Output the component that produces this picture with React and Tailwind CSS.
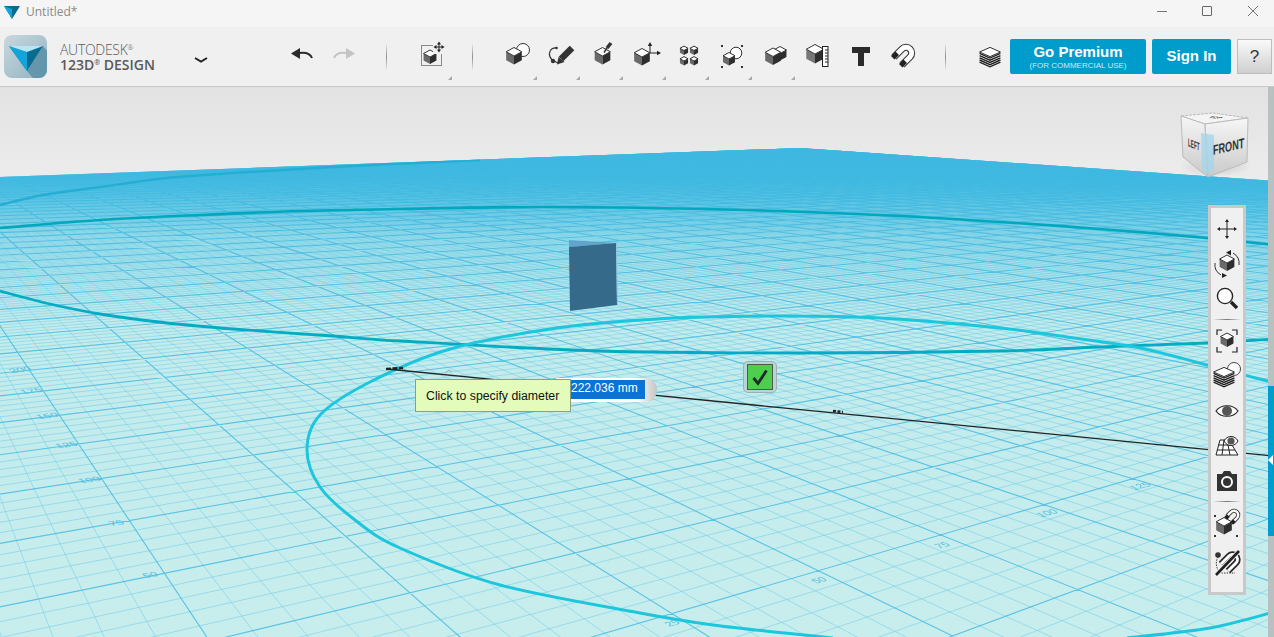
import React from "react";

/* ---------- ground-plane projection ---------- */
const A = 0.1106, B = 0.1486;
const V1 = [2290, 140], V2 = [-150, 100], O = [493, 666];
function H(i, j) {
  const d = 1 + A * i + B * j;
  return [
    (A * V1[0] * i + B * V2[0] * j + O[0]) / d,
    (A * V1[1] * i + B * V2[1] * j + O[1]) / d,
  ];
}
const IMIN = -40, IMAX = 58, JMIN = -3, JMAX = 66;
function seg(p, q) {
  return `M${p[0].toFixed(1)} ${p[1].toFixed(1)}L${q[0].toFixed(1)} ${q[1].toFixed(1)}`;
}
function buildGrid() {
  let major = "", minor = "";
  for (let k = IMIN * 5; k <= IMAX * 5; k++) {
    const i = k / 5;
    const j0 = Math.max(JMIN, (0.2 - 1 - A * i) / B);
    const s = seg(H(i, j0), H(i, JMAX));
    if (k % 5 === 0) major += s; else minor += s;
  }
  for (let k = JMIN * 5; k <= JMAX * 5; k++) {
    const j = k / 5;
    const i0 = Math.max(IMIN, (0.2 - 1 - B * j) / A);
    const s = seg(H(i0, j), H(IMAX, j));
    if (k % 5 === 0) major += s; else minor += s;
  }
  return { major, minor };
}
const GRID = buildGrid();

function smooth(pts) {
  let d = `M${pts[0][0]} ${pts[0][1]}`;
  for (let n = 0; n < pts.length - 1; n++) {
    const p0 = pts[n - 1] || pts[n], p1 = pts[n], p2 = pts[n + 1], p3 = pts[n + 2] || p2;
    const c1 = [p1[0] + (p2[0] - p0[0]) / 6, p1[1] + (p2[1] - p0[1]) / 6];
    const c2 = [p2[0] - (p3[0] - p1[0]) / 6, p2[1] - (p3[1] - p1[1]) / 6];
    d += `C${c1[0].toFixed(1)} ${c1[1].toFixed(1)} ${c2[0].toFixed(1)} ${c2[1].toFixed(1)} ${p2[0]} ${p2[1]}`;
  }
  return d;
}
const CURVE_FAINT = smooth([[0,205],[43,195],[100,187],[167,178],[233,173],[333,167],[480,160]]);
const CURVE_TOP = smooth([[0,228],[100,220],[200,215],[300,211],[400,209],[540,207],[707,209],[880,215],[1000,222],[1100,229],[1207,238],[1274,245]]);
const CURVE_LOW = smooth([[0,291],[50,304],[100,314],[167,323],[233,329],[333,336],[400,341],[600,351],[800,353],[1000,351],[1100,347],[1207,343],[1274,339]]);
const CYAN_TOP = smooth([[1274,383],[1207,365],[1140,348],[1067,337],[1000,328],[880,318],[770,316],[657,319],[550,329],[447,350],[370,382],[320,415],[307,450],[320,487],[355,520],[400,548],[500,585],[640,613],[713,625],[785,633],[833,638]]);
const CYAN_BR = smooth([[1127,638],[1210,628],[1274,612]]);

const LEFT_LABELS = [["50",152,577],["75",118,525],["100",91,482],["125",68,447],["150",49,418],["175",33,393],["200",22,372]];
const RIGHT_LABELS = [["25",675,625],["50",822,582],["75",945,547],["100",1050,515],["125",1143,488]];

/* ---------- icon helpers ---------- */
function Cube({ x, y, s, top = "#fff", left = "#6a6a6a", right = "#2e2e2e" }) {
  const w = s * 0.92;
  return (
    <g>
      <polygon points={`${x-w},${y-s*0.5} ${x},${y} ${x},${y+s} ${x-w},${y+s*0.5}`} fill={left} />
      <polygon points={`${x+w},${y-s*0.5} ${x},${y} ${x},${y+s} ${x+w},${y+s*0.5}`} fill={right} />
      <polygon points={`${x},${y-s} ${x+w},${y-s*0.5} ${x},${y} ${x-w},${y-s*0.5}`} fill={top} stroke="#333" strokeWidth="1" />
    </g>
  );
}
function Ico({ children, w = 32, h = 32 }) {
  return <svg width={w} height={h} viewBox={`0 0 ${w} ${h}`} className="block">{children}</svg>;
}
function Arrows4({ x, y, r, sw = 1 }) {
  const a = 2;
  return (
    <g fill="#222" stroke="none">
      <path d={`M${x-r} ${y}H${x+r}M${x} ${y-r}V${y+r}`} stroke="#222" strokeWidth={sw} fill="none" />
      <polygon points={`${x},${y-r-a} ${x-a},${y-r+a/2} ${x+a},${y-r+a/2}`} />
      <polygon points={`${x},${y+r+a} ${x-a},${y+r-a/2} ${x+a},${y+r-a/2}`} />
      <polygon points={`${x-r-a},${y} ${x-r+a/2},${y-a} ${x-r+a/2},${y+a}`} />
      <polygon points={`${x+r+a},${y} ${x+r-a/2},${y-a} ${x+r-a/2},${y+a}`} />
    </g>
  );
}
const IconAdd = () => (
  <Ico>
    <rect x="5.5" y="4.5" width="20" height="20" fill="none" stroke="#222" strokeWidth="1" strokeDasharray="1 1" />
    <Cube x={14} y={16} s={7} />
    <rect x="17" y="1" width="13" height="12" fill="#f0f0f0" />
    <Arrows4 x={23} y={6} r={3.5} />
  </Ico>
);
const IconPrimitive = () => (
  <Ico>
    <circle cx="22" cy="9" r="6.5" fill="#fff" stroke="#333" strokeWidth="1" />
    <Cube x={13} y={15} s={8.5} />
  </Ico>
);
const IconSketch = () => (
  <Ico>
    <path d="M13 7C6 6 3 13 8 19L14 22" fill="none" stroke="#333" strokeWidth="1.2" />
    <circle cx="9" cy="20" r="2.2" fill="#333" />
    <circle cx="12.5" cy="7" r="1.3" fill="#333" />
    <path d="M17 18L28 7" stroke="#333" strokeWidth="6.5" />
    <polygon points="13,23.5 14.5,16 20.5,21" fill="#333" />
  </Ico>
);
const IconConstruct = () => (
  <Ico>
    <Cube x={15.5} y={15} s={8.5} />
    <path d="M17 11.5L20 7" stroke="#333" strokeWidth="1.5" />
    <path d="M20 7L24 2" stroke="#333" strokeWidth="3.5" />
  </Ico>
);
const IconTransform = () => (
  <Ico>
    <Cube x={12} y={16} s={8.5} />
    <path d="M20 12V4M20 12H28" stroke="#222" strokeWidth="1" />
    <polygon points="20,1 17.8,5 22.2,5" fill="#222" />
    <polygon points="31,12 27,9.8 27,14.2" fill="#222" />
  </Ico>
);
const IconPattern = () => (
  <Ico>
    <Cube x={11} y={9.5} s={4.4} />
    <Cube x={21} y={9.5} s={4.4} />
    <Cube x={11} y={20} s={4.4} />
    <Cube x={21} y={20} s={4.4} />
  </Ico>
);
const IconGroup = () => (
  <Ico>
    <circle cx="20" cy="12" r="5.8" fill="#fff" stroke="#333" strokeWidth="1" />
    <Cube x={13} y={18} s={6.5} />
    {[[6,5],[26,5],[6,26],[26,26]].map(([x,y]) => <rect key={x+"-"+y} x={x-1} y={y-1} width="2" height="2" fill="#333" />)}
  </Ico>
);
const IconCombine = () => (
  <Ico>
    <Cube x={21} y={12.5} s={7} />
    <Cube x={14} y={15.5} s={8.5} />
  </Ico>
);
const IconMeasure = () => (
  <Ico>
    <Cube x={13} y={13} s={9.5} left="#777" />
    <rect x="20.5" y="5.5" width="5.5" height="20" fill="#fff" stroke="#222" strokeWidth="1" />
    <path d="M23 9h3M23 12h3M23 15h3M23 18h3M23 21h3" stroke="#222" strokeWidth="1" />
  </Ico>
);
const IconT = () => (
  <Ico>
    <path d="M7 6H25V12H19V25H13V12H7Z" fill="#2b2b2b" />
  </Ico>
);
const IconMagnet = () => (
  <Ico>
    <g transform="translate(0 -3)">
      <path d="M6 19L14 11A5.5 5.5 0 0 1 22 19L14 27" fill="none" stroke="#333" strokeWidth="7" />
      <path d="M6 19L14 11A5.5 5.5 0 0 1 22 19L14 27" fill="none" stroke="#fff" strokeWidth="5" />
      <polygon points="3,18 7.5,13.5 11,17 6.5,21.5" fill="#222" />
      <polygon points="11,26 15.5,21.5 19,25 14.5,29.5" fill="#222" />
    </g>
  </Ico>
);
function Stack({ x, y, s, lines = 5 }) {
  const w = s * 0.95;
  const h = s * 0.42;
  const rows = [];
  for (let n = 0; n < lines; n++) {
    const dy = n * 2.2;
    rows.push(
      <path key={n} d={`M${x-w} ${y+1.4+dy}L${x} ${y+h+1.4+dy}L${x+w} ${y+1.4+dy}`} fill="none" stroke="#1f1f1f" strokeWidth="1.4" />
    );
  }
  return (
    <g>
      <polygon points={`${x-w},${y} ${x},${y+h} ${x+w},${y} ${x+w},${y+lines*2.2} ${x},${y+h+lines*2.2} ${x-w},${y+lines*2.2}`} fill="#fff" />
      {rows}
      <polygon points={`${x},${y-h} ${x+w},${y} ${x},${y+h} ${x-w},${y}`} fill="#fff" stroke="#333" strokeWidth="1" />
    </g>
  );
}
const IconStack = () => <Ico><Stack x={16} y={11} s={11} /></Ico>;
const IconMove = () => <Ico><Arrows4 x={16} y={16} r={8} /></Ico>;
const IconOrbit = () => (
  <Ico>
    <path d="M22 5A12 12 0 0 1 28 17" fill="none" stroke="#333" strokeWidth="1" />
    <path d="M10 27A12 12 0 0 1 4 15" fill="none" stroke="#333" strokeWidth="1" />
    <polygon points="15,4.5 20,2 20,7.5" fill="#222" />
    <polygon points="16,27.5 11,25 11,30" fill="#222" />
    <Cube x={16} y={15} s={8} />
  </Ico>
);
const IconZoom = () => (
  <Ico>
    <circle cx="14" cy="13" r="7.6" fill="#fff" stroke="#222" strokeWidth="1.4" />
    <path d="M20 19L26 25" stroke="#222" strokeWidth="3.4" />
  </Ico>
);
const IconFit = () => (
  <Ico>
    <path d="M6 10V5H11M21 5H26V10M26 22V27H21M11 27H6V22" fill="none" stroke="#222" strokeWidth="1.2" />
    <Cube x={16} y={15} s={7} />
  </Ico>
);
const IconLayers = () => (
  <Ico>
    <circle cx="23" cy="9" r="6.5" fill="#fff" stroke="#444" strokeWidth="1" />
    <Stack x={13} y={12} s={11} />
  </Ico>
);
const IconEye = () => (
  <Ico>
    <path d="M5 16C10 9 22 9 27 16C22 23 10 23 5 16Z" fill="#fff" stroke="#222" strokeWidth="1.2" />
    <circle cx="16" cy="16" r="5" fill="#555" />
  </Ico>
);
const IconGridEye = () => (
  <Ico>
    <path d="M9 10H18L27 25H5Z" fill="#fff" stroke="#222" strokeWidth="1" />
    <path d="M7.5 15H21M6 20H24M13 10L11 25M16 10L19 25" stroke="#222" strokeWidth="1" />
    <path d="M13 11C16 5 24 5 27 11C24 17 16 17 13 11Z" fill="#fff" stroke="#222" strokeWidth="1" />
    <circle cx="20" cy="11" r="3.6" fill="#555" />
  </Ico>
);
const IconCamera = () => (
  <Ico>
    <path d="M6 9H11L13 6H19L21 9H26V26H6Z" fill="#333" />
    <circle cx="16" cy="17" r="5" fill="#333" stroke="#fff" strokeWidth="2" />
  </Ico>
);
const IconSnap = () => (
  <Ico>
    <Cube x={13} y={19} s={8.5} />
    <path d="M16 9L20 5A4 4 0 0 1 26 11L22 15" fill="none" stroke="#333" strokeWidth="4" />
    <path d="M16 9L20 5A4 4 0 0 1 26 11L22 15" fill="none" stroke="#fff" strokeWidth="2.4" />
    <rect x="14" y="8" width="4" height="4" fill="#222" transform="rotate(45 16 10)" />
    <rect x="20" y="13" width="4" height="4" fill="#222" transform="rotate(45 22 15)" />
    {[[4,9],[4,29],[26,29]].map(([x,y]) => <rect key={x+"-"+y} x={x-1} y={y-1} width="2" height="2" fill="#333" />)}
  </Ico>
);
const IconNoSnap = () => (
  <Ico>
    <circle cx="7" cy="9" r="2.8" fill="#333" />
    <path d="M7 11C4 16 5 24 10 27H24" fill="none" stroke="#333" strokeWidth="1" strokeDasharray="1.4 1.2" />
    <path d="M10 18L18 10A4.5 4.5 0 0 1 25 17L17 25" fill="none" stroke="#2a2a2a" strokeWidth="6.5" />
    <path d="M10 18L18 10A4.5 4.5 0 0 1 25 17L17 25" fill="none" stroke="#fff" strokeWidth="3" />
    <path d="M5 29L28 5" stroke="#f0f0f0" strokeWidth="4.5" />
    <path d="M5 29L28 5" stroke="#1f1f1f" strokeWidth="2.6" />
  </Ico>
);

function Sep() {
  return <div className="w-px h-[28px] bg-gradient-to-b from-[#f0f0f0] via-[#8f8f8f] to-[#f0f0f0]" />;
}
function Slot({ children, mark = false }) {
  return (
    <div className="relative w-[43px] h-[32px] flex items-center justify-center">
      {children}
      {mark && (
        <div className="absolute right-[1px] -bottom-[7px] w-0 h-0 border-l-[4px] border-l-transparent border-b-[4px] border-b-[#a8a8a8]" />
      )}
    </div>
  );
}
function Row({ children }) {
  return <div className="h-[35px] flex items-center justify-center">{children}</div>;
}
function PanelSep() {
  return (
    <div className="h-[7px] flex items-center justify-center">
      <div className="w-[28px] h-px bg-gradient-to-r from-[#f0f0f0] via-[#777777] to-[#f0f0f0]" />
    </div>
  );
}

function Logo() {
  return (
    <svg width="43" height="43" viewBox="0 0 43 43" className="block shrink-0">
      <defs>
        <linearGradient id="lg" x1="0" y1="0" x2="1" y2="1">
          <stop offset="0" stopColor="#c9d8de" />
          <stop offset="1" stopColor="#8fb2c2" />
        </linearGradient>
      </defs>
      <rect width="43" height="43" rx="8" fill="url(#lg)" />
      <path d="M23 36L39 11L43 16V35A8 8 0 0 1 35 43H29Z" fill="#6496ac" />
      <polygon points="5,11 39,11 23,36" fill="#0a6b90" />
      <polygon points="5,11 23,17 23,36" fill="#11a5dc" />
      <polygon points="5,11 39,11 23,17" fill="#b6e6f6" />
    </svg>
  );
}

function NavCube() {
  return (
    <svg width="74" height="72" viewBox="0 0 74 72" className="block">
      <defs>
        <linearGradient id="cf" x1="0" y1="0" x2="0" y2="1">
          <stop offset="0" stopColor="#f6f6f6" />
          <stop offset="1" stopColor="#c9c9c9" />
        </linearGradient>
        <radialGradient id="cs">
          <stop offset="0" stopColor="#000" stopOpacity="0.14" />
          <stop offset="1" stopColor="#000" stopOpacity="0" />
        </radialGradient>
      </defs>
      <ellipse cx="38" cy="56" rx="36" ry="10" fill="url(#cs)" />
      <polygon points="3,5 35,2 70,7 27,13" fill="#f4f4f4" stroke="#bbb" strokeWidth="1" strokeDasharray="3 1" />
      <polygon points="3,5 27,13 30,66 5,46" fill="url(#cf)" stroke="#bbb" strokeWidth="1" />
      <polygon points="27,13 70,7 69,51 30,66" fill="url(#cf)" stroke="#bbb" strokeWidth="1" />
      <polygon points="23,22 36,24 36,58 30,63 24,58" fill="#a4d6ea" opacity="0.8" />
      <text x="0" y="0" fontSize="11" fontWeight="700" fill="#333" fontFamily="'Liberation Sans', sans-serif" transform="matrix(0.42 0.17 0 1 10 35)">LEFT</text>
      <text x="0" y="0" fontSize="14" fontWeight="700" fill="#333" fontFamily="'Liberation Sans', sans-serif" transform="matrix(0.65 -0.15 0 1 35 44)">FRONT</text>
      <text x="0" y="0" fontSize="6" fontWeight="700" fill="#333" fontFamily="'Liberation Sans', sans-serif" transform="matrix(1 0.06 -0.8 0.4 30 7)">TOP</text>
    </svg>
  );
}

function Scene() {
  const floor = "0,177 800,148 1274,181 1274,637 0,637";
  return (
    <svg className="absolute inset-0 block" width="1274" height="550" viewBox="0 87 1274 550">
      <defs>
        <linearGradient id="fl" x1="0" y1="148" x2="0" y2="637" gradientUnits="userSpaceOnUse">
          <stop offset="0" stopColor="#3ab8df" />
          <stop offset="0.07" stopColor="#4fc0e2" />
          <stop offset="0.18" stopColor="#a4e0ea" />
          <stop offset="0.36" stopColor="#c2ebec" />
          <stop offset="1" stopColor="#c8eded" />
        </linearGradient>
        <linearGradient id="ming" x1="0" y1="148" x2="0" y2="637" gradientUnits="userSpaceOnUse">
          <stop offset="0" stopColor="#38b6de" stopOpacity="0.25" />
          <stop offset="0.12" stopColor="#45bbe0" stopOpacity="0.22" />
          <stop offset="0.35" stopColor="#55c2e3" stopOpacity="0.4" />
          <stop offset="0.6" stopColor="#6fcbe7" stopOpacity="0.6" />
          <stop offset="1" stopColor="#6fcbe7" stopOpacity="0.6" />
        </linearGradient>
        <clipPath id="fc"><polygon points={floor} /></clipPath>
      </defs>
      <polygon points={floor} fill="url(#fl)" />
      <g clipPath="url(#fc)" fill="none">
        <path d={GRID.minor} stroke="url(#ming)" strokeWidth="0.9" />
        <path d={GRID.major} stroke="#3fb8e1" strokeWidth="1.1" strokeOpacity="0.8" />
        <path d={CURVE_FAINT} stroke="#25aed4" strokeWidth="2.5" />
        <path d={CURVE_TOP} stroke="#00a8bd" strokeWidth="2.6" />
        <path d={CURVE_LOW} stroke="#03acc2" strokeWidth="2.8" />
        <path d={CYAN_TOP} stroke="#1cc6dc" strokeWidth="3" />
        <path d={CYAN_BR} stroke="#1cc6dc" strokeWidth="3" />
      </g>
      <g fontFamily="'Liberation Sans', sans-serif" fontSize="11" fill="#55bfe0">
        {LEFT_LABELS.map(([t, x, y]) => (
          <text key={t} x="0" y="0" textAnchor="middle" transform={`matrix(1.15 -0.15 0.5 0.55 ${x} ${y})`}>{t}</text>
        ))}
        {RIGHT_LABELS.map(([t, x, y]) => (
          <text key={t} x="0" y="0" textAnchor="middle" transform={`matrix(0.95 -0.28 0.8 0.5 ${x} ${y})`}>{t}</text>
        ))}
      </g>
      {/* extruded face */}
      <polygon points="569,240 616,243 569,247" fill="#5fa5cc" />
      <polygon points="569,247 616,243 617,305 570,311" fill="#366a8b" />
      <polygon points="616,243 617,243 618,305 617,305" fill="#8fc4dc" />
      {/* diameter line */}
      <path d="M387 369L1274 456" stroke="#222" strokeWidth="1.3" />
      <path d="M386 369L403 368" stroke="#222" strokeWidth="2.6" strokeDasharray="5 1.5" />
      <path d="M833 411L843 412" stroke="#222" strokeWidth="2.4" strokeDasharray="3 1.5" />
      <path d="M445 373L449 370L452 372" fill="none" stroke="#9aa" strokeWidth="1" />
    </svg>
  );
}

export default function App() {
  return (
    <div className="w-[1274px] h-[637px] overflow-hidden flex flex-col bg-[#f0f0f0] font-['Liberation_Sans',sans-serif]">
      {/* title bar */}
      <div className="h-[27px] bg-[#f5f5f5] flex items-center shrink-0">
        <svg width="16" height="16" viewBox="0 0 16 16" className="ml-[4px] -mt-[3px] block">
          <polygon points="0,2 16,2 8,15" fill="#0a6b90" />
          <polygon points="0,2 8,5 8,15" fill="#11a5dc" />
        </svg>
        <span className="ml-[6px] -mt-[3px] text-[12px] text-[#8a8a8a] font-['Open_Sans',sans-serif]">Untitled*</span>
        <div className="ml-auto flex items-center -mt-[5px]">
          <div className="w-[10px] h-px bg-[#777777]" />
          <div className="ml-[35px] w-[10px] h-[10px] border border-[#666666] rounded-[1px]" />
          <svg width="12" height="12" viewBox="0 0 12 12" className="ml-[35px] mr-[15px] block">
            <path d="M1 1L11 11M11 1L1 11" stroke="#777" strokeWidth="1" />
          </svg>
        </div>
      </div>

      {/* toolbar */}
      <div className="h-[60px] shrink-0 border-b border-[#c8c8c8] bg-[#f0f0f0] flex items-center pl-[4px]">
        <Logo />
        <div className="ml-[13px] w-[100px] shrink-0 flex flex-col font-['Open_Sans',sans-serif] text-[#5a5a5a] leading-none">
          <span className="text-[14px] font-light leading-[15px] whitespace-nowrap tracking-[-0.3px]">AUTODESK<span className="text-[7px] align-[5px] leading-none">®</span></span>
          <span className="text-[14px] font-semibold leading-[15px] whitespace-nowrap">123D<span className="text-[7px] align-[5px] leading-none">®</span> DESIGN</span>
        </div>
        <svg width="14" height="6" viewBox="0 0 14 6" className="ml-[34px] mt-[6px] block shrink-0">
          <path d="M1 1L7 4.5L13 1" fill="none" stroke="#222" strokeWidth="2" />
        </svg>
        <svg width="22" height="12" viewBox="0 0 22 12" className="ml-[83px] -mt-[6px] block shrink-0">
          <polygon points="0,5.5 9,0 9,11" fill="#2b2b2b" />
          <path d="M8 5C14 4 19 5 21 10" fill="none" stroke="#2b2b2b" strokeWidth="2" />
        </svg>
        <svg width="22" height="12" viewBox="0 0 22 12" className="ml-[20px] -mt-[6px] block shrink-0">
          <polygon points="22,5.5 13,0 13,11" fill="#c4c4c4" />
          <path d="M14 5C8 4 3 5 1 10" fill="none" stroke="#c4c4c4" strokeWidth="2" />
        </svg>
        <div className="ml-[31px]"><Sep /></div>
        <div className="ml-[23px]"><Slot mark><IconAdd /></Slot></div>
        <div className="ml-[19px]"><Sep /></div>
        <div className="ml-[22px] flex">
          <Slot mark><IconPrimitive /></Slot>
          <Slot mark><IconSketch /></Slot>
          <Slot mark><IconConstruct /></Slot>
          <Slot mark><IconTransform /></Slot>
          <Slot mark><IconPattern /></Slot>
          <Slot mark><IconGroup /></Slot>
          <Slot mark><IconCombine /></Slot>
          <Slot><IconMeasure /></Slot>
          <Slot><IconT /></Slot>
          <Slot><IconMagnet /></Slot>
        </div>
        <div className="ml-[20px]"><Sep /></div>
        <div className="ml-[28px] shrink-0"><IconStack /></div>
        <div className="ml-[4px] w-[136px] h-[35px] bg-[#009ccc] rounded-[2px] text-white flex flex-col items-center justify-center shrink-0">
          <span className="text-[15px] font-bold leading-[17px]">Go Premium</span>
          <span className="text-[8px] leading-[11px] text-[#cdeaf5]">(FOR COMMERCIAL USE)</span>
        </div>
        <div className="ml-[6px] w-[79px] h-[35px] bg-[#009ccc] rounded-[2px] text-white text-[15px] font-bold flex items-center justify-center shrink-0">Sign In</div>
        <div className="ml-[6px] w-[35px] h-[35px] border border-[#bdbdbd] bg-gradient-to-b from-[#fafafa] to-[#cfcfcf] text-[#333333] text-[17px] flex items-center justify-center shrink-0">?</div>
      </div>

      {/* viewport */}
      <div className="relative flex-1 bg-gradient-to-b from-[#e2e2e2] to-[#ebebeb] to-[15%] overflow-hidden">
        <Scene />

        {/* right strip */}
        <div className="absolute right-0 top-0 bottom-0 w-[6px] bg-[#b7c1bf]">
          <div className="absolute left-0 right-0 top-[299px] h-[150px] bg-[#009ccc]" />
          <div className="absolute left-0 top-[368px] w-0 h-0 border-y-[5px] border-y-transparent border-r-[5px] border-r-white" />
        </div>

        {/* view cube */}
        <div className="absolute left-[1178px] top-[24px]"><NavCube /></div>

        {/* nav panel */}
        <div className="absolute left-[1208px] top-[118px] w-[38px] h-[390px] border-[3px] border-[#c9c9c9] bg-[#f0f0f0] pt-[3px] flex flex-col">
          <Row><IconMove /></Row>
          <Row><IconOrbit /></Row>
          <Row><IconZoom /></Row>
          <PanelSep />
          <Row><IconFit /></Row>
          <Row><IconLayers /></Row>
          <Row><IconEye /></Row>
          <Row><IconGridEye /></Row>
          <Row><IconCamera /></Row>
          <PanelSep />
          <Row><IconSnap /></Row>
          <div className="mt-[4px]"><Row><IconNoSnap /></Row></div>
        </div>

        {/* dimension input */}
        <div className="absolute left-[556px] top-[291px] w-[101px] h-[24px] rounded-r-[12px] bg-gradient-to-r from-[#ffffff] from-[80%] to-[#c4c4c4] flex items-start pl-[15px] pt-[2px]">
          <div className="w-[74px] h-[19px] bg-[#0a74d6] text-white text-[12px] leading-[17px] whitespace-nowrap">222.036 mm</div>
        </div>

        {/* tooltip */}
        <div className="absolute left-[415px] top-[292px] w-[156px] h-[33px] bg-[#e3fcbb] border border-[#8f9f7e] text-[12.3px] text-[#111111] flex items-center pl-[10px] pt-[1px] whitespace-nowrap">
          Click to specify diameter
        </div>

        {/* confirm */}
        <div className="absolute left-[743px] top-[274px] w-[34px] h-[32px] rounded-[5px] border border-[#9fb0b3] bg-[#b9d4d6] flex items-center justify-center">
          <div className="w-[26px] h-[26px] bg-[#4dcf4d] border border-[#4b5a4b] flex items-center justify-center">
            <svg width="20" height="20" viewBox="0 0 20 20" className="block">
              <path d="M3.5 11L8 16.5L16.5 3.5" fill="none" stroke="#1f2a2a" strokeWidth="2.8" />
            </svg>
          </div>
        </div>
      </div>
    </div>
  );
}
